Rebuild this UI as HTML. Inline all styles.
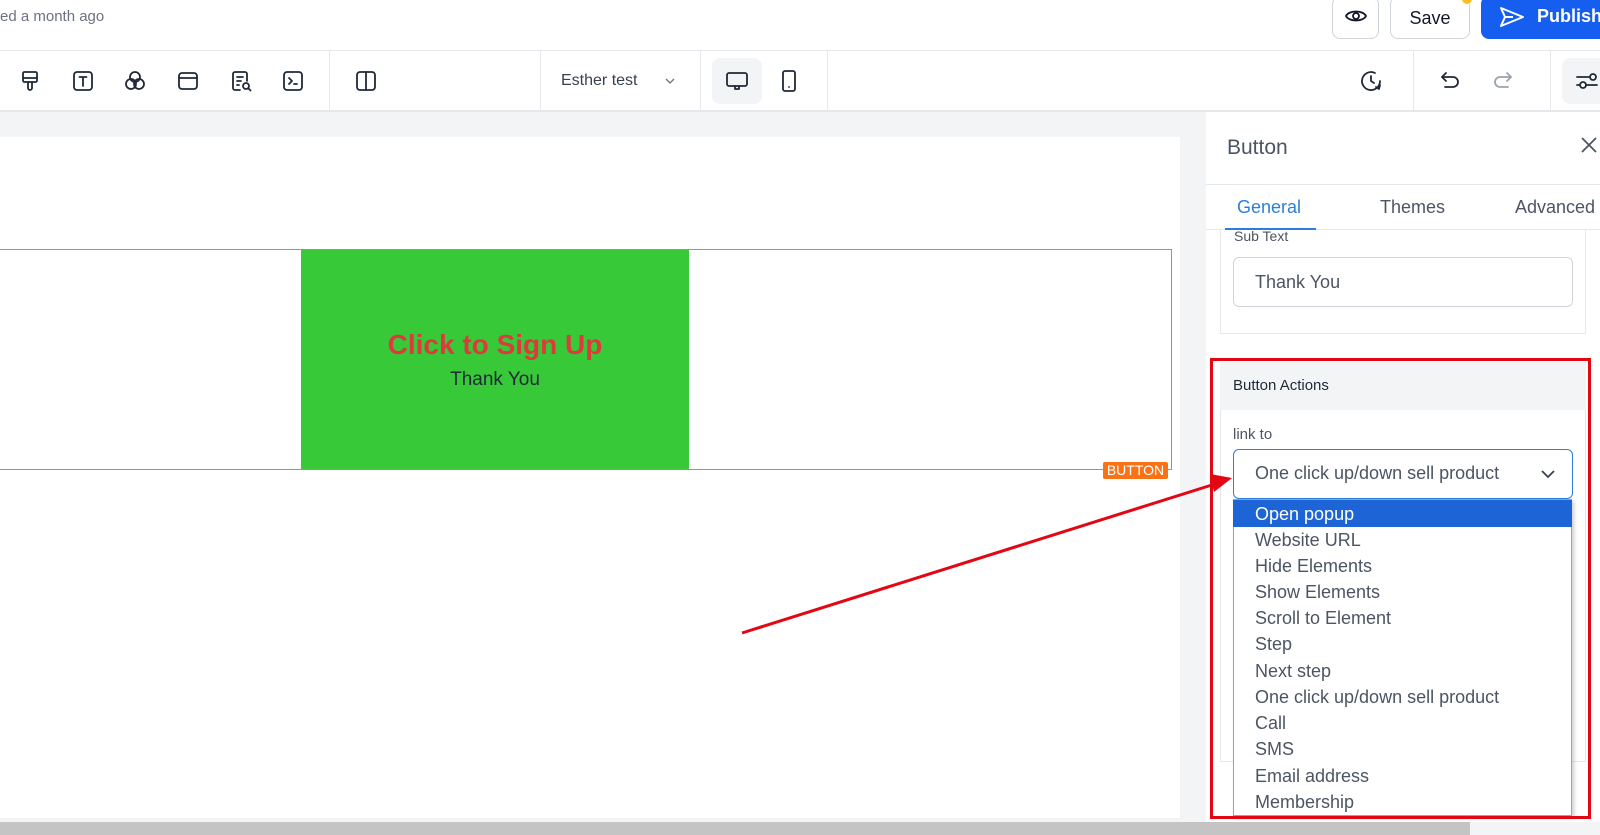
<!DOCTYPE html>
<html><head><meta charset="utf-8"><style>
*{box-sizing:border-box;margin:0;padding:0}
body{width:1600px;height:835px;overflow:hidden;background:#f3f4f6;font-family:"Liberation Sans",sans-serif;position:relative;color:#374151}
.abs{position:absolute}
.ic{position:absolute;top:69px;width:24px;height:24px}
.ic svg{width:24px;height:24px;fill:none;stroke:#1f2937;stroke-width:1.8;stroke-linecap:round;stroke-linejoin:round}
.vd{position:absolute;top:51px;width:1px;height:60px;background:#e5e7eb}
.opt{position:absolute;left:1233px;width:339px;height:26px;font-size:18px;line-height:26px;padding-left:22px;color:#4b5563}
</style></head><body>
<div class="abs" style="left:0;top:0;width:1600px;height:51px;background:#fff;border-bottom:1px solid #e5e7eb"></div>
<div class="abs" style="left:0;top:8px;font-size:15px;color:#6b7280">ed a month ago</div>
<div class="abs" style="left:1332px;top:-4px;width:47px;height:43px;border:1px solid #d1d5db;border-radius:8px;background:#fff"></div>
<svg class="abs" style="left:1344px;top:7px" width="24" height="18" viewBox="0 0 24 18" fill="none" stroke="#111827" stroke-width="1.8"><path d="M2 9C5 3 19 3 22 9C19 15 5 15 2 9Z"/><circle cx="12" cy="9" r="3"/></svg>
<div class="abs" style="left:1390px;top:-4px;width:80px;height:43px;border:1px solid #d1d5db;border-radius:8px;background:#fff;font-size:18px;color:#111827;text-align:center;line-height:42px">Save</div>
<div class="abs" style="left:1462px;top:-6px;width:10px;height:10px;border-radius:50%;background:#fbbf24"></div>
<div class="abs" style="left:1481px;top:-4px;width:130px;height:43px;border-radius:8px;background:#155eef;color:#fff;font-weight:bold;font-size:18px;line-height:40px;padding-left:56px">Publish</div>
<svg class="abs" style="left:1499px;top:6px" width="26" height="22" viewBox="0 0 26 22" fill="none" stroke="#fff" stroke-width="2" stroke-linejoin="round"><path d="M2 2L24 11L2 20L6 11Z M6 11H14"/></svg>

<div class="abs" style="left:0;top:51px;width:1600px;height:61px;background:#fff;border-bottom:2px solid #e5e7eb"></div>
<div class="ic" style="left:18px"><svg viewBox="0 0 24 24"><rect x="5" y="3" width="14" height="10" rx="1.5"/><path d="M5 9H19M10 13V19A2 2 0 0 0 14 19V13"/></svg></div>
<div class="ic" style="left:71px"><svg viewBox="0 0 24 24"><rect x="3" y="3" width="18" height="18" rx="3"/><path d="M8.5 8H15.5M12 8V17"/></svg></div>
<div class="ic" style="left:123px"><svg viewBox="0 0 24 24"><circle cx="12" cy="8" r="5"/><circle cx="8" cy="15" r="5"/><circle cx="16" cy="15" r="5"/></svg></div>
<div class="ic" style="left:176px"><svg viewBox="0 0 24 24"><rect x="3" y="4" width="18" height="16" rx="3"/><path d="M3 9H21"/></svg></div>
<div class="ic" style="left:229px"><svg viewBox="0 0 24 24"><path d="M11 21H6A2 2 0 0 1 4 19V5A2 2 0 0 1 6 3H16A2 2 0 0 1 18 5V12"/><path d="M8 8H14M8 12H12M8 16H10"/><circle cx="17" cy="17" r="3"/><path d="M19.5 19.5L21.5 21.5"/></svg></div>
<div class="ic" style="left:281px"><svg viewBox="0 0 24 24"><rect x="3" y="3" width="18" height="18" rx="3"/><path d="M8 9L11 12L8 15M13 15H16"/></svg></div>
<div class="vd" style="left:329px"></div>
<div class="ic" style="left:354px"><svg viewBox="0 0 24 24"><rect x="3" y="3" width="18" height="18" rx="3"/><path d="M12 3V21"/></svg></div>
<div class="vd" style="left:540px"></div>
<div class="abs" style="left:561px;top:72px;font-size:16px;color:#374151">Esther test</div>
<svg class="abs" style="left:664px;top:75px" width="12" height="12" viewBox="0 0 12 12" fill="none" stroke="#6b7280" stroke-width="1.3"><path d="M2 4L6 8L10 4"/></svg>
<div class="vd" style="left:700px"></div>
<div class="abs" style="left:712px;top:58px;width:50px;height:46px;border-radius:8px;background:#f3f4f6"></div>
<div class="ic" style="left:725px"><svg viewBox="0 0 24 24"><rect x="2" y="4" width="20" height="13" rx="2"/><path d="M10 17V20H14V17"/></svg></div>
<div class="ic" style="left:777px"><svg viewBox="0 0 24 24"><rect x="6" y="2" width="12" height="20" rx="2"/><path d="M12 18H12.01"/></svg></div>
<div class="vd" style="left:827px"></div>
<div class="ic" style="left:1359px"><svg viewBox="0 0 24 24"><path d="M21 12A9 9 0 1 1 16 4"/><path d="M12 7V12L15 14"/><path d="M21 16L20 20L17 18"/></svg></div>
<div class="vd" style="left:1413px"></div>
<div class="ic" style="left:1438px"><svg viewBox="0 0 24 24"><path d="M8 4L4 8L8 12"/><path d="M4 8H15A5 5 0 0 1 15 18H7"/></svg></div>
<div class="ic" style="left:1491px"><svg viewBox="0 0 24 24" style="stroke:#9ca3af"><path d="M16 4L20 8L16 12"/><path d="M20 8H9A5 5 0 0 0 9 18H17"/></svg></div>
<div class="vd" style="left:1550px"></div>
<div class="abs" style="left:1562px;top:58px;width:50px;height:46px;border-radius:8px;background:#f3f4f6"></div>
<div class="ic" style="left:1575px"><svg viewBox="0 0 24 24"><path d="M2 8H14M2 16H4"/><circle cx="18" cy="8" r="3"/><circle cx="8" cy="16" r="3"/><path d="M11 16H22"/></svg></div>

<div class="abs" style="left:0;top:137px;width:1180px;height:681px;background:#fff"></div>
<div class="abs" style="left:0;top:249px;width:1172px;height:221px;border:1.5px solid #f07a2a;border-left:none"></div>
<div class="abs" style="left:301px;top:250px;width:388px;height:219px;background:#37c937;text-align:center">
<div style="margin-top:79px;font-size:28px;font-weight:bold;color:#e0393d">Click to Sign Up</div>
<div style="margin-top:8px;font-size:19px;color:#1f2937">Thank You</div></div>
<div class="abs" style="left:1103px;top:462px;width:65px;height:17px;background:#f97316;color:#fff;font-size:14px;line-height:17px;text-align:center;border-radius:2px">BUTTON</div>

<div class="abs" style="left:0;top:822px;width:1470px;height:13px;background:#c4c4c4"></div>

<div class="abs" style="left:1206px;top:112px;width:394px;height:710px;background:#fff"></div>
<div class="abs" style="left:1227px;top:136px;font-size:21px;color:#4b5563">Button</div>
<svg class="abs" style="left:1580px;top:136px" width="18" height="18" viewBox="0 0 18 18" stroke="#4b5563" stroke-width="1.8"><path d="M2 2L16 16M16 2L2 16"/></svg>
<div class="abs" style="left:1206px;top:184px;width:394px;height:1px;background:#e5e7eb"></div>
<div class="abs" style="left:1237px;top:197px;font-size:18px;color:#2b7fd9">General</div>
<div class="abs" style="left:1380px;top:197px;font-size:18px;color:#4b5563">Themes</div>
<div class="abs" style="left:1515px;top:197px;font-size:18px;color:#4b5563">Advanced</div>
<div class="abs" style="left:1220px;top:230px;width:366px;height:104px;border:1px solid #e5e7eb;border-top:none;overflow:hidden;background:#fff">
<div style="position:absolute;left:13px;top:-2px;font-size:14px;color:#4b5563">Sub Text</div></div>
<div class="abs" style="left:1206px;top:229px;width:394px;height:1px;background:#e5e7eb"></div>
<div class="abs" style="left:1225px;top:228px;width:91px;height:2px;background:#2b7fd9"></div>
<div class="abs" style="left:1233px;top:257px;width:340px;height:50px;border:1px solid #d1d5db;border-radius:6px;font-size:18px;color:#4b5563;line-height:48px;padding-left:21px">Thank You</div>

<div class="abs" style="left:1220px;top:362px;width:366px;height:400px;border:1px solid #e5e7eb;background:#fff"></div>
<div class="abs" style="left:1220px;top:362px;width:366px;height:48px;background:#f3f4f6;font-size:15px;color:#1f2937;line-height:48px;padding-left:13px">Button Actions</div>
<div class="abs" style="left:1233px;top:426px;font-size:15px;color:#4b5563">link to</div>
<div class="abs" style="left:1233px;top:449px;width:340px;height:50px;border:1.5px solid #2b7fd9;border-radius:6px;font-size:18px;color:#4b5563;line-height:47px;padding-left:21px">One click up/down sell product</div>
<svg class="abs" style="left:1540px;top:468px" width="16" height="12" viewBox="0 0 16 12" fill="none" stroke="#374151" stroke-width="1.8"><path d="M2 3L8 9L14 3"/></svg>
<div class="abs" style="left:1233px;top:499px;width:339px;height:317px;background:#fff;border:1px solid #9ca3af;box-shadow:2px 2px 4px rgba(0,0,0,.2)"></div>
<div class="opt" style="top:500px;height:27px;line-height:29px;background:#1d64d6;color:#fff">Open popup</div>
<div class="opt" style="top:527px">Website URL</div>
<div class="opt" style="top:553px">Hide Elements</div>
<div class="opt" style="top:579px">Show Elements</div>
<div class="opt" style="top:605px">Scroll to Element</div>
<div class="opt" style="top:631px">Step</div>
<div class="opt" style="top:658px">Next step</div>
<div class="opt" style="top:684px">One click up/down sell product</div>
<div class="opt" style="top:710px">Call</div>
<div class="opt" style="top:736px">SMS</div>
<div class="opt" style="top:763px">Email address</div>
<div class="opt" style="top:789px">Membership</div>

<div class="abs" style="left:1210px;top:358px;width:381px;height:461px;border:3px solid #e30613"></div>
<svg class="abs" style="left:0;top:0" width="1600" height="835"><line x1="742" y1="633" x2="1215" y2="484" stroke="#e30613" stroke-width="3"/><path d="M1232 478L1210 474L1214 492Z" fill="#e30613"/></svg>
</body></html>
